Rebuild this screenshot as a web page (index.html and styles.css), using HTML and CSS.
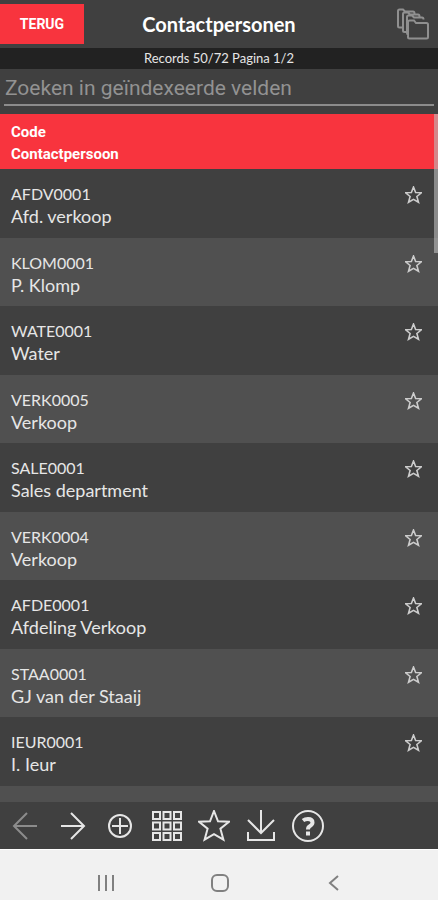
FILE: index.html
```html
<!DOCTYPE html>
<html lang="nl">
<head>
<meta charset="utf-8">
<meta name="viewport" content="width=device-width, initial-scale=1">
<title>Contactpersonen</title>
<link rel="stylesheet" href="styles.css">
</head>
<body>
<svg class="defs" aria-hidden="true">
  <symbol id="star" viewBox="0 0 32 32"><path d="M16 1l4 10.300 11 .5-8.600 6.900 3 11-9.400-5.500-9.400 5.500 3-11L1 11.800l11-.5z"/></symbol>
</svg>
<header class="titlebar">
  <button class="back" type="button">TERUG</button>
  <h1 class="title">Contactpersonen</h1>
  <button class="icon-button" type="button" aria-label="Mappen">
    <svg class="folders" viewBox="0 0 32 32"><path d="M5 19.500H2.500Q1 19.500 1 18V3q0-1.500 1.500-1.500H6l2 2h8q1.500 0 1.500 2M9 24H7.500Q6 24 6 22.500V6q0-1.500 1.500-1.500H11l2 2h8q1.500 0 1.500 2M11 26.500q-1-.5-1-1.500V9q0-1.500 1.500-1.500H15l2 2h8q1.500 0 1.500 2M11 29V14q0-1.500 1.500-1.500H17l2 2.500h10.500q1.500 0 1.500 1.500V29q0 1.500-1.500 1.500h-17Q11 30.500 11 29z"/></svg>
  </button>
</header>
<p class="records">Records 50/72 Pagina 1/2</p>
<form class="search"><input class="search-field" type="text" aria-label="Zoeken" placeholder="Zoeken in geïndexeerde velden"></form>
<main class="list">
  <div class="columns"><span>Code</span><span>Contactpersoon</span></div>
  <ul class="rows">
    <li class="row"><div><p class="code">AFDV0001</p><p class="name">Afd. verkoop</p></div><button class="favorite" type="button" aria-label="Favoriet"><svg><use href="#star"/></svg></button></li>
    <li class="row"><div><p class="code">KLOM0001</p><p class="name">P. Klomp</p></div><button class="favorite" type="button" aria-label="Favoriet"><svg><use href="#star"/></svg></button></li>
    <li class="row"><div><p class="code">WATE0001</p><p class="name">Water</p></div><button class="favorite" type="button" aria-label="Favoriet"><svg><use href="#star"/></svg></button></li>
    <li class="row"><div><p class="code">VERK0005</p><p class="name">Verkoop</p></div><button class="favorite" type="button" aria-label="Favoriet"><svg><use href="#star"/></svg></button></li>
    <li class="row"><div><p class="code">SALE0001</p><p class="name">Sales department</p></div><button class="favorite" type="button" aria-label="Favoriet"><svg><use href="#star"/></svg></button></li>
    <li class="row"><div><p class="code">VERK0004</p><p class="name">Verkoop</p></div><button class="favorite" type="button" aria-label="Favoriet"><svg><use href="#star"/></svg></button></li>
    <li class="row"><div><p class="code">AFDE0001</p><p class="name">Afdeling Verkoop</p></div><button class="favorite" type="button" aria-label="Favoriet"><svg><use href="#star"/></svg></button></li>
    <li class="row"><div><p class="code">STAA0001</p><p class="name">GJ van der Staaij</p></div><button class="favorite" type="button" aria-label="Favoriet"><svg><use href="#star"/></svg></button></li>
    <li class="row"><div><p class="code">IEUR0001</p><p class="name">I. Ieur</p></div><button class="favorite" type="button" aria-label="Favoriet"><svg><use href="#star"/></svg></button></li>
    <li class="row"></li>
  </ul>
  <div class="scroll-thumb"></div>
</main>
<nav class="toolbar" aria-label="Acties">
  <button class="icon-button" type="button" aria-label="Vorige" disabled><svg viewBox="0 0 32 32"><path d="M27 16H4M17 3L4 16l13 13"/></svg></button>
  <button class="icon-button" type="button" aria-label="Volgende"><svg viewBox="0 0 32 32"><path d="M4 16h23M14 3l13 13-13 13"/></svg></button>
  <button class="icon-button" type="button" aria-label="Toevoegen"><svg viewBox="0 0 32 32"><circle cx="16" cy="16" r="11"/><path d="M16 8v16M8 16h16"/></svg></button>
  <button class="icon-button" type="button" aria-label="Raster"><svg viewBox="0 0 32 32"><path d="M2 2h7v7H2zM12.500 2h7v7h-7zM23 2h7v7h-7zM2 12.500h7v7H2zM12.500 12.500h7v7h-7zM23 12.500h7v7h-7zM2 23h7v7H2zM12.500 23h7v7h-7zM23 23h7v7h-7z"/></svg></button>
  <button class="icon-button" type="button" aria-label="Favorieten"><svg viewBox="0 0 32 32"><use href="#star"/></svg></button>
  <button class="icon-button" type="button" aria-label="Downloaden"><svg viewBox="0 0 32 32"><path d="M16 0v23M3 10l13 13 13-13M3 22v8h26v-8"/></svg></button>
  <button class="icon-button" type="button" aria-label="Help"><svg viewBox="0 0 32 32"><circle cx="16" cy="16" r="15"/><path class="bold" d="M11 10.500Q13 9 16 9q4.500 0 4.500 3.500 0 2-2.500 3.500-2 1-2 3.500M16 21.500v4"/></svg></button>
</nav>
<nav class="system" aria-label="Systeem">
  <button class="icon-button" type="button" aria-label="Recente apps"><svg viewBox="0 0 20 20"><path d="M3 2v16M10 2v16M17 2v16"/></svg></button>
  <button class="icon-button" type="button" aria-label="Startscherm"><svg viewBox="0 0 20 20"><rect x="2" y="2" width="16" height="16" rx="5"/></svg></button>
  <button class="icon-button" type="button" aria-label="Terug"><svg viewBox="0 0 20 20"><path d="M14 3l-8 7 8 7"/></svg></button>
</nav>
</body>
</html>
```
FILE: styles.css
```css
* { box-sizing: border-box; }
body {
  margin: 0;
  height: 100vh;
  display: flex;
  flex-direction: column;
  background: #404040;
  color: #e6e6e6;
  font-family: Lato, "Liberation Sans", sans-serif;
  overflow: hidden;
}
p, h1, ul { margin: 0; padding: 0; }
button { border: 0; padding: 0; background: none; color: inherit; font: inherit; }
svg { display: block; fill: none; stroke: currentColor; stroke-width: 2; }
.defs { position: absolute; width: 0; height: 0; }
.titlebar {
  flex: none;
  display: grid;
  grid-template-columns: 84px 1fr 84px;
  align-items: center;
  height: 48px;
}
.back {
  height: 40px;
  background: #f8343e;
  color: #fff;
  font: 700 14px Roboto, sans-serif;
}
.title {
  text-align: center;
  color: #fff;
  font-size: 20px;
  line-height: 24px;
  font-weight: 700;
}
.titlebar .icon-button { justify-self: end; margin-right: 9px; color: #909090; }
.folders { width: 32px; height: 32px; }
.records {
  flex: none;
  background: #222;
  text-align: center;
  font-size: 13px;
  line-height: 21px;
}
.search { flex: none; height: 45px; padding: 3px 4px 0; }
.search-field {
  display: block;
  width: 100%;
  height: 34px;
  padding: 0 1px;
  border: 0;
  border-bottom: 2px solid #8c8c8c;
  border-radius: 0;
  outline: 0;
  background: none;
  color: #fff;
  font: 21px Roboto, sans-serif;
}
.search-field::placeholder { color: #929292; opacity: 1; }
.list { position: relative; flex: 1; min-height: 0; overflow: hidden; }
.columns {
  display: flex;
  flex-direction: column;
  height: 55px;
  padding: 7px 11px 0;
  background: #f8343e;
  color: #fff;
  font: 700 15px/22px Roboto, sans-serif;
}
.rows { list-style: none; }
.row {
  display: flex;
  justify-content: space-between;
  align-items: flex-start;
  height: 69px;
  padding: 13px 16px 0 11px;
  line-height: 23px;
}
.row:nth-child(even) { height: 68px; background: #505050; }
.code { font-size: 16px; }
.name { font-size: 18px; }
.favorite { margin-top: 4px; }
.favorite svg { width: 17px; height: 18px; color: #ccc; stroke-width: 3; }
.scroll-thumb {
  position: absolute;
  top: 0;
  right: 0;
  width: 4px;
  height: 139px;
  background: rgba(190, 190, 190, 0.6);
}
.toolbar {
  flex: none;
  display: flex;
  align-items: center;
  gap: 15px;
  height: 47px;
  padding: 0 10px;
}
.toolbar svg { width: 32px; height: 32px; }
.toolbar button:disabled { color: #8c8c8c; }
.toolbar .bold { stroke-width: 4; }
.system {
  flex: none;
  display: flex;
  justify-content: center;
  gap: 94px;
  height: 51px;
  padding: 16px 0 0 2px;
  border-top: 1px solid #fff;
  background: #f1f1f1;
  color: #808080;
}
.system svg { width: 20px; height: 20px; }
```
